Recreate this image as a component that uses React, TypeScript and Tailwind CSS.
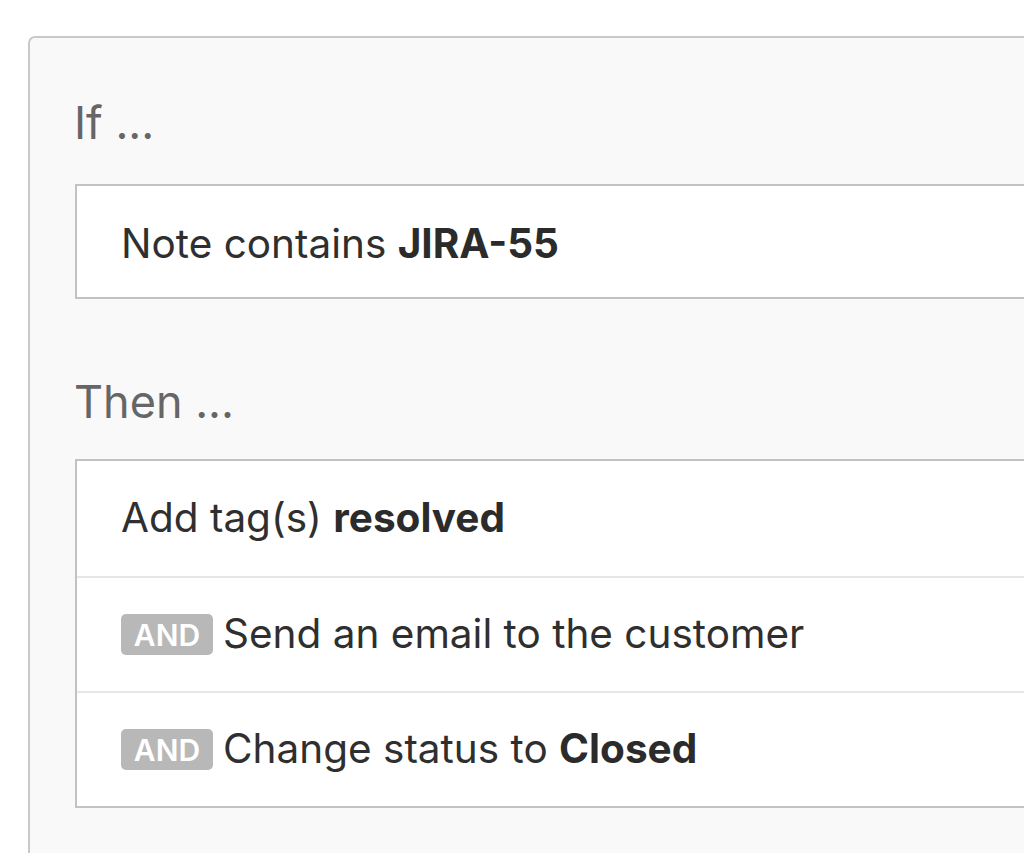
import React from 'react';

type Action = { and?: boolean; text: string; value?: string };

const actions: Action[] = [
  { text: 'Add tag(s)', value: 'resolved' },
  { and: true, text: 'Send an email to the customer' },
  { and: true, text: 'Change status to', value: 'Closed' },
];

const AndBadge = () => (
  <span className="mr-[10px] inline-flex h-[41px] w-[92px] shrink-0 items-center justify-center rounded-[5px] bg-[#b8b8b8] text-[30px] font-semibold leading-none text-white">
    AND
  </span>
);

export default function App() {
  return (
    <div
      className="h-[853px] w-[1024px] overflow-hidden bg-white pl-[28px] pt-[36px]"
      style={{ fontFamily: 'Inter, "Liberation Sans", Arial, sans-serif' }}
    >
      <div className="h-[900px] w-[1100px] rounded-tl-[7px] border-2 border-[#c9c9c9] bg-[#f9f9f9] px-[45px] pt-[62px]">
        {/* condition */}
        <h2 className="-ml-[1px] mb-[38px] h-[46px] text-[45px] font-normal leading-none text-[#666]">If ...</h2>
        <div className="flex h-[115px] items-center border-2 border-[#c2c2c2] bg-white pl-[44px] pt-[6px] text-[40.5px] leading-none text-[#2f2f2f]">
          <span>
            Note contains <b className="font-bold text-[#2b2b2b]">JIRA-55</b>
          </span>
        </div>

        {/* actions */}
        <h2 className="-ml-[1px] mb-[34px] mt-[80px] h-[46px] text-[45px] font-normal leading-none text-[#666]">Then ...</h2>
        <div className="border-2 border-[#c2c2c2] bg-white">
          {actions.map((a, i) => (
            <div
              key={i}
              className={`flex h-[115px] items-center pl-[44px] text-[40.5px] leading-none text-[#2f2f2f] ${i > 0 ? 'border-t-2 border-[#e6e6e6]' : ''}`}
            >
              {a.and && <AndBadge />}
              <span>
                {a.text}
                {a.value && (
                  <>
                    {' '}
                    <b className="font-bold text-[#2b2b2b]">{a.value}</b>
                  </>
                )}
              </span>
            </div>
          ))}
        </div>
      </div>
    </div>
  );
}
